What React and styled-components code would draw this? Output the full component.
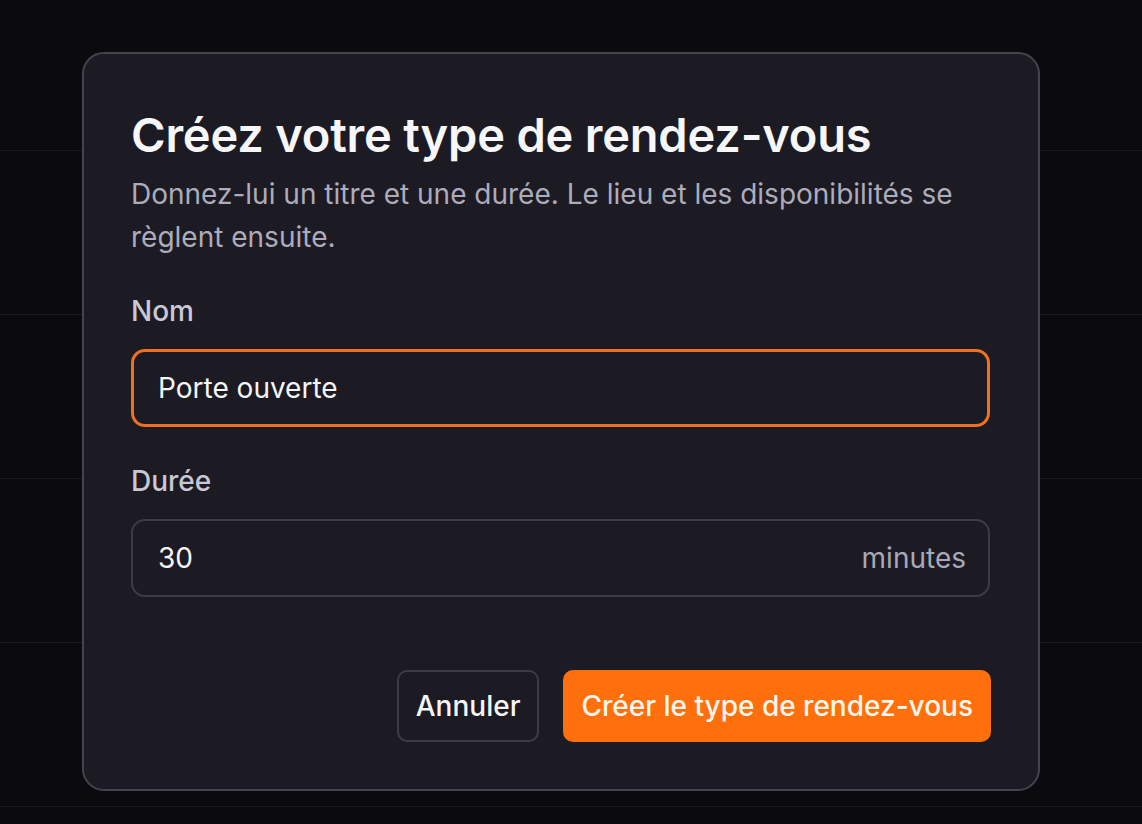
import React, { useState } from "react"
import styled, { createGlobalStyle } from "styled-components"

const Global = createGlobalStyle`
    * { box-sizing: border-box; }
    html, body {
        margin: 0;
        background: #0b0a0f;
        font-family: Inter, "Noto Sans", sans-serif;
        -webkit-font-smoothing: antialiased;
    }
`

const Page = styled.div`
    min-height: 824px;
    background: #0b0a0f;
    display: flex;
    flex-direction: column;
`

const BgRow = styled.div`
    height: ${p => p.h || 164}px;
    flex-shrink: 0;
    border-bottom: 1px solid #1b1a21;
`

const Overlay = styled.div`
    position: fixed;
    inset: 0;
    display: flex;
    justify-content: center;
    align-items: flex-start;
    padding: 52px 20px 0 0;
`

const Dialog = styled.div`
    width: 958px;
    background: #1c1b24;
    border: 2px solid #45444e;
    border-radius: 22px;
    padding: 53px 48px 47px 47px;
    display: flex;
    flex-direction: column;
`

const Title = styled.h2`
    margin: 0;
    color: #f7f7f9;
    font-size: 47px;
    font-weight: 600;
    line-height: 56px;
    letter-spacing: -0.2px;
`

const Subtitle = styled.p`
    margin: 10px 0 0;
    color: #adacba;
    font-size: 28px;
    line-height: 43px;
    max-width: 840px;
`

const Field = styled.div`
    display: flex;
    flex-direction: column;
    gap: 21px;
    margin-top: ${p => p.top || 35}px;
`

const Label = styled.label`
    color: #c9c8d4;
    font-size: 28px;
    font-weight: 500;
    line-height: 34px;
`

const InputBox = styled.div`
    height: 78px;
    display: flex;
    align-items: center;
    gap: 12px;
    border-radius: 14px;
    border: ${p => (p.focused ? "3px solid #f07020" : "2px solid #3c3b46")};
    padding: 0 22px 0 ${p => (p.focused ? 24 : 25)}px;
    background: #1c1b24;
`

const Input = styled.input`
    flex: 1;
    min-width: 0;
    border: none;
    outline: none;
    background: transparent;
    color: #f5f5f7;
    font-family: inherit;
    font-size: 28px;
    padding: 0;
`

const Suffix = styled.span`
    color: #a9a8b6;
    font-size: 28px;
`

const Footer = styled.div`
    display: flex;
    justify-content: flex-end;
    gap: 24px;
    margin: 73px -1px 0 0;
`

const Button = styled.button`
    height: 72px;
    padding: 0 ${p => (p.primary ? 16 : 17)}px;
    border-radius: 10px;
    font-family: inherit;
    font-size: 28px;
    font-weight: 500;
    cursor: pointer;
    color: ${p => (p.primary ? "#fff7f0" : "#f5f5f7")};
    background: ${p => (p.primary ? "#ff6f0b" : "transparent")};
    border: 2px solid ${p => (p.primary ? "#ff6f0b" : "#3c3b46")};
`

export default () => {
    const [name, setName] = useState("Porte ouverte")
    const [duration, setDuration] = useState("30")

    return <Page>
        <Global />
        <BgRow h={151} />
        <BgRow />
        <BgRow />
        <BgRow />
        <BgRow />
        <Overlay>
            <Dialog>
                <Title>Créez votre type de rendez-vous</Title>
                <Subtitle>Donnez-lui un titre et une durée. Le lieu et les disponibilités se règlent ensuite.</Subtitle>
                <Field top={35}>
                    <Label>Nom</Label>
                    <InputBox focused>
                        <Input value={name} onChange={e => setName(e.target.value)} />
                    </InputBox>
                </Field>
                <Field top={37}>
                    <Label>Durée</Label>
                    <InputBox>
                        <Input value={duration} onChange={e => setDuration(e.target.value)} />
                        <Suffix>minutes</Suffix>
                    </InputBox>
                </Field>
                <Footer>
                    <Button>Annuler</Button>
                    <Button primary>Créer le type de rendez-vous</Button>
                </Footer>
            </Dialog>
        </Overlay>
    </Page>
}
